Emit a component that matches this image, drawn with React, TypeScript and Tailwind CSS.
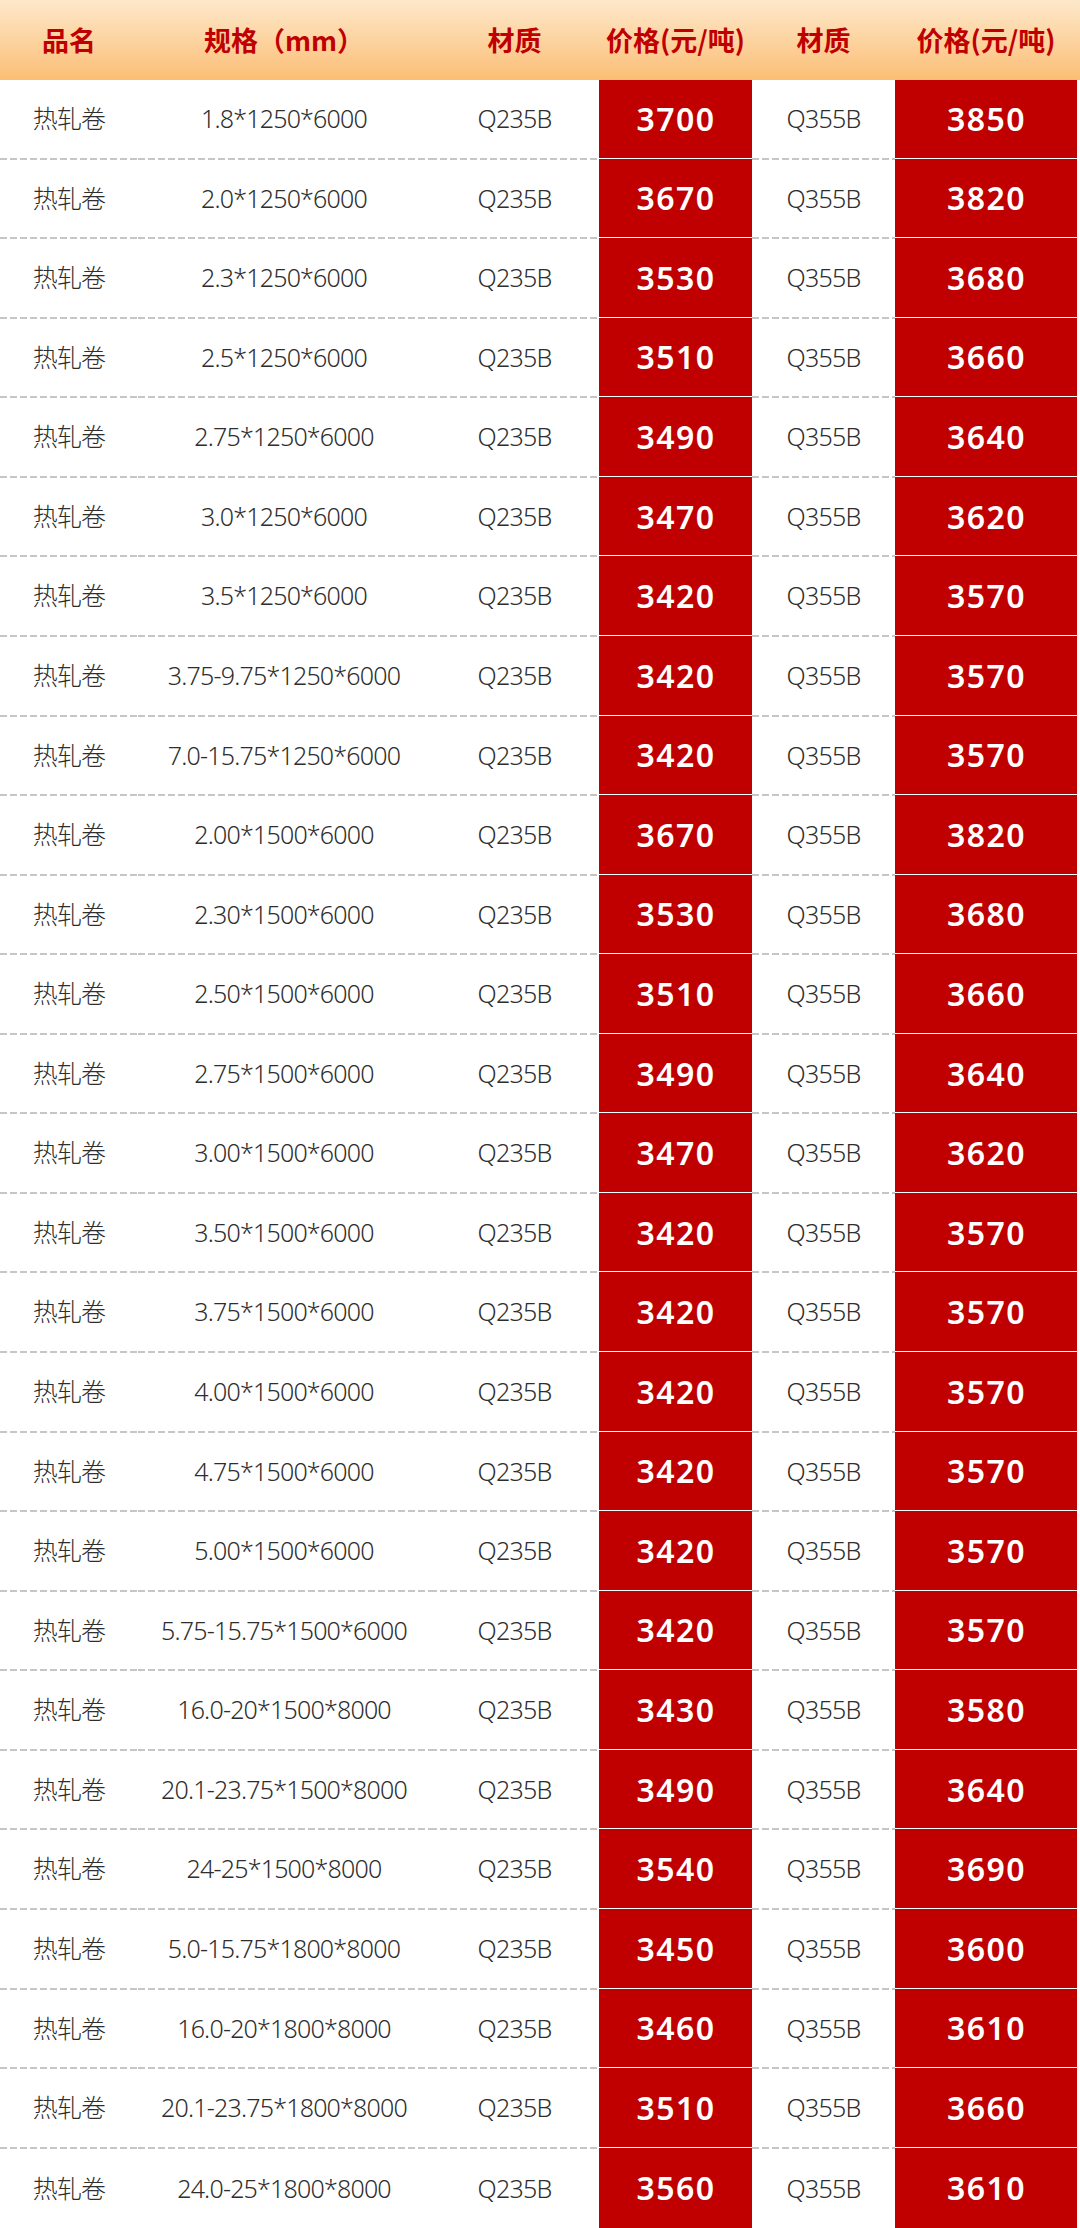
import { Fragment } from "react";

type Row = { spec: string; p1: string; p2: string };

const rows: Row[] = [
  { spec: "1.8*1250*6000", p1: "3700", p2: "3850" },
  { spec: "2.0*1250*6000", p1: "3670", p2: "3820" },
  { spec: "2.3*1250*6000", p1: "3530", p2: "3680" },
  { spec: "2.5*1250*6000", p1: "3510", p2: "3660" },
  { spec: "2.75*1250*6000", p1: "3490", p2: "3640" },
  { spec: "3.0*1250*6000", p1: "3470", p2: "3620" },
  { spec: "3.5*1250*6000", p1: "3420", p2: "3570" },
  { spec: "3.75-9.75*1250*6000", p1: "3420", p2: "3570" },
  { spec: "7.0-15.75*1250*6000", p1: "3420", p2: "3570" },
  { spec: "2.00*1500*6000", p1: "3670", p2: "3820" },
  { spec: "2.30*1500*6000", p1: "3530", p2: "3680" },
  { spec: "2.50*1500*6000", p1: "3510", p2: "3660" },
  { spec: "2.75*1500*6000", p1: "3490", p2: "3640" },
  { spec: "3.00*1500*6000", p1: "3470", p2: "3620" },
  { spec: "3.50*1500*6000", p1: "3420", p2: "3570" },
  { spec: "3.75*1500*6000", p1: "3420", p2: "3570" },
  { spec: "4.00*1500*6000", p1: "3420", p2: "3570" },
  { spec: "4.75*1500*6000", p1: "3420", p2: "3570" },
  { spec: "5.00*1500*6000", p1: "3420", p2: "3570" },
  { spec: "5.75-15.75*1500*6000", p1: "3420", p2: "3570" },
  { spec: "16.0-20*1500*8000", p1: "3430", p2: "3580" },
  { spec: "20.1-23.75*1500*8000", p1: "3490", p2: "3640" },
  { spec: "24-25*1500*8000", p1: "3540", p2: "3690" },
  { spec: "5.0-15.75*1800*8000", p1: "3450", p2: "3600" },
  { spec: "16.0-20*1800*8000", p1: "3460", p2: "3610" },
  { spec: "20.1-23.75*1800*8000", p1: "3510", p2: "3660" },
  { spec: "24.0-25*1800*8000", p1: "3560", p2: "3610" },
];

const cols = "grid grid-cols-[138px_292px_169px_153px_143px_182px]";

// plain cell: centred text with a grey dashed rule underneath
function TextCell({ children, last }: { children: string; last: boolean }) {
  return (
    <div className="flex flex-col">
      <div className="flex flex-1 items-center justify-center whitespace-nowrap text-[25px] font-light tracking-[-0.8px] text-[#2e2e2e]">
        {children}
      </div>
      {!last && (
        <div className="h-[2px] bg-[repeating-linear-gradient(90deg,#c6c6c6_0_7px,transparent_7px_10px)]" />
      )}
    </div>
  );
}

// red price cell, separated from the next one by a thin white line
function PriceCell({ children, last }: { children: string; last: boolean }) {
  return (
    <div className="flex flex-col bg-[#c00000]">
      <div className="flex flex-1 items-center justify-center pl-[1px] font-['Noto_Sans',sans-serif] text-[32px] font-semibold tracking-[1.5px] text-white">
        {children}
      </div>
      {!last && <div className="h-[2px] border-t border-white" />}
    </div>
  );
}

const headers = ["品名", "规格（mm）", "材质", "价格(元/吨)", "材质", "价格(元/吨)"];

export default function App() {
  return (
    <div className="flex h-[2228px] w-[1080px] flex-col bg-white font-['Noto_Sans','Noto_Sans_CJK_SC',sans-serif]">
      <div className="h-[80px] shrink-0 bg-gradient-to-b from-[#fde8ca] to-[#fbbe74] pr-[1px]">
        <div className={`${cols} h-full`}>
          {headers.map((h, i) => (
            <div
              key={i}
              className="flex items-center justify-center font-['Noto_Sans_CJK_SC',sans-serif] text-[27px] font-bold text-[#c00000]"
            >
              {h}
            </div>
          ))}
        </div>
      </div>

      {rows.map((r, i) => {
        const last = i === rows.length - 1;
        return (
          <div key={i} className={`${cols} flex-1 pr-[3px]`}>
            <Fragment>
              <TextCell last={last}>热轧卷</TextCell>
              <TextCell last={last}>{r.spec}</TextCell>
              <TextCell last={last}>Q235B</TextCell>
              <PriceCell last={last}>{r.p1}</PriceCell>
              <TextCell last={last}>Q355B</TextCell>
              <PriceCell last={last}>{r.p2}</PriceCell>
            </Fragment>
          </div>
        );
      })}
    </div>
  );
}
